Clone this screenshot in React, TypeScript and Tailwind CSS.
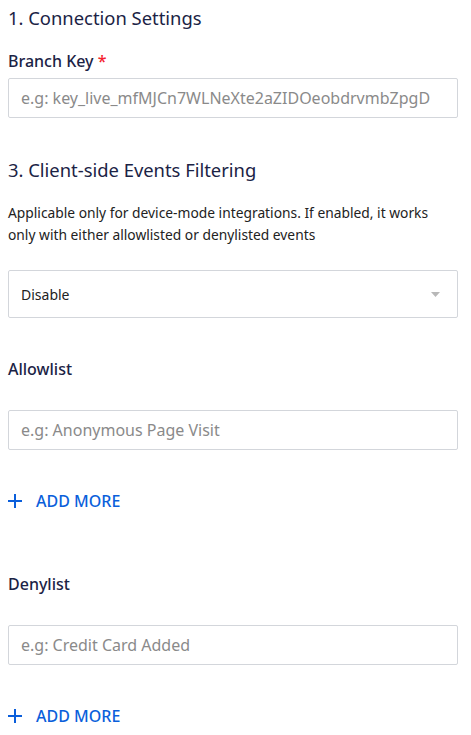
export default function App() {
  return (
    <div className="min-h-screen bg-white px-2 font-['Noto_Sans',sans-serif] text-[#1b2345]">
      {/* Connection Settings */}
      <h2 className="pt-[5px] text-[18.4px] leading-[26px]">1. Connection Settings</h2>

      <label className="mt-[19px] block text-[16px] font-medium leading-[22px]">
        Branch Key <span className="text-[#f5222d]">*</span>
      </label>
      <input
        className="mt-[6px] block h-[40px] w-[450px] rounded-[2px] border border-[#d3d6db] px-[12px] text-[16px] outline-none placeholder:text-[#8a8a8a]"
        placeholder="e.g: key_live_mfMJCn7WLNeXte2aZIDOeobdrvmbZpgD"
      />

      {/* Client-side Events Filtering */}
      <h2 className="mt-[39px] text-[18.4px] leading-[26px]">3. Client-side Events Filtering</h2>
      <p className="mt-[19px] max-w-[436px] text-[13.8px] leading-[22px] text-[#222]">
        Applicable only for device-mode integrations. If enabled, it works only with either allowlisted or denylisted events
      </p>

      <div className="mt-[24px] flex h-[48px] w-[450px] items-center justify-between rounded-[2px] border border-[#d3d6db] pl-[12px] pr-[17px] text-[14px] text-[#222]">
        <span>Disable</span>
        <svg width="9" height="5" viewBox="0 0 9 5">
          <path d="M0 0H9L4.5 5Z" fill="#b8b8b8" />
        </svg>
      </div>

      <ListField label="Allowlist" placeholder="e.g: Anonymous Page Visit" top="mt-[40px]" />
      <ListField label="Denylist" placeholder="e.g: Credit Card Added" top="mt-[61px]" />
    </div>
  );
}

function ListField({ label, placeholder, top }: { label: string; placeholder: string; top: string }) {
  return (
    <div className={top}>
      <div className="text-[16px] font-medium leading-[22px]">{label}</div>
      <input
        className="mt-[30px] block h-[40px] w-[450px] rounded-[2px] border border-[#d3d6db] px-[12px] text-[16px] outline-none placeholder:text-[#8a8a8a]"
        placeholder={placeholder}
      />
      <button className="mt-[40px] flex items-center gap-[14px] text-[16px] font-medium leading-[22px] text-[#0b5fdb]">
        <svg width="14" height="14" viewBox="0 0 14 14">
          <path d="M7 0V14M0 7H14" stroke="#0b5fdb" strokeWidth="2" />
        </svg>
        ADD MORE
      </button>
    </div>
  );
}
